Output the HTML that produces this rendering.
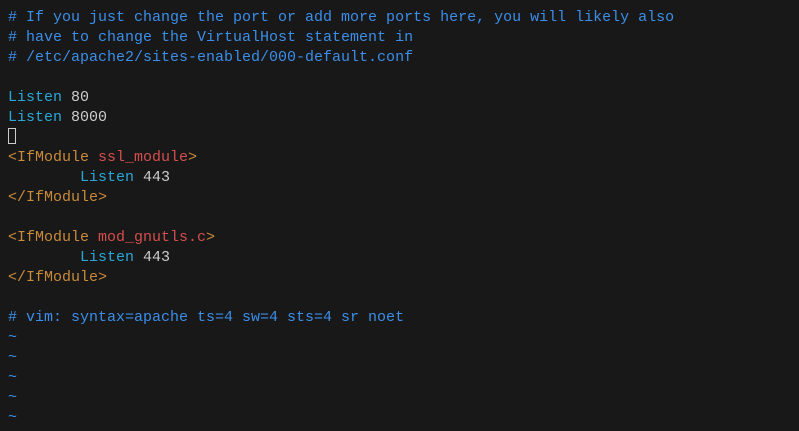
<!DOCTYPE html><html><head><style>
html,body{margin:0;background:#181818;width:799px;height:431px;overflow:hidden}
pre{margin:0;position:absolute;left:8px;top:8px;font-family:"Liberation Mono",monospace;font-size:15px;line-height:20px;color:#cccccc}
.c{color:#3b8eea}.k{color:#29a8d8}.t{color:#c98a3a}.a{color:#d54e4e}.w{color:#3b8eea}
.cur{display:inline-block;width:8px;height:16px;border:1px solid #ccc;box-sizing:border-box;vertical-align:-3px}
</style></head><body><pre><span class="c"># If you just change the port or add more ports here, you will likely also
# have to change the VirtualHost statement in
# /etc/apache2/sites-enabled/000-default.conf</span>

<span class="k">Listen</span> 80
<span class="k">Listen</span> 8000
<span class="cur"></span>
<span class="t">&lt;IfModule <span class="a">ssl_module</span>&gt;</span>
        <span class="k">Listen</span> 443
<span class="t">&lt;/IfModule&gt;</span>

<span class="t">&lt;IfModule <span class="a">mod_gnutls.c</span>&gt;</span>
        <span class="k">Listen</span> 443
<span class="t">&lt;/IfModule&gt;</span>

<span class="c"># vim: syntax=apache ts=4 sw=4 sts=4 sr noet</span>
<span class="w">~
~
~
~
~</span></pre></body></html>
